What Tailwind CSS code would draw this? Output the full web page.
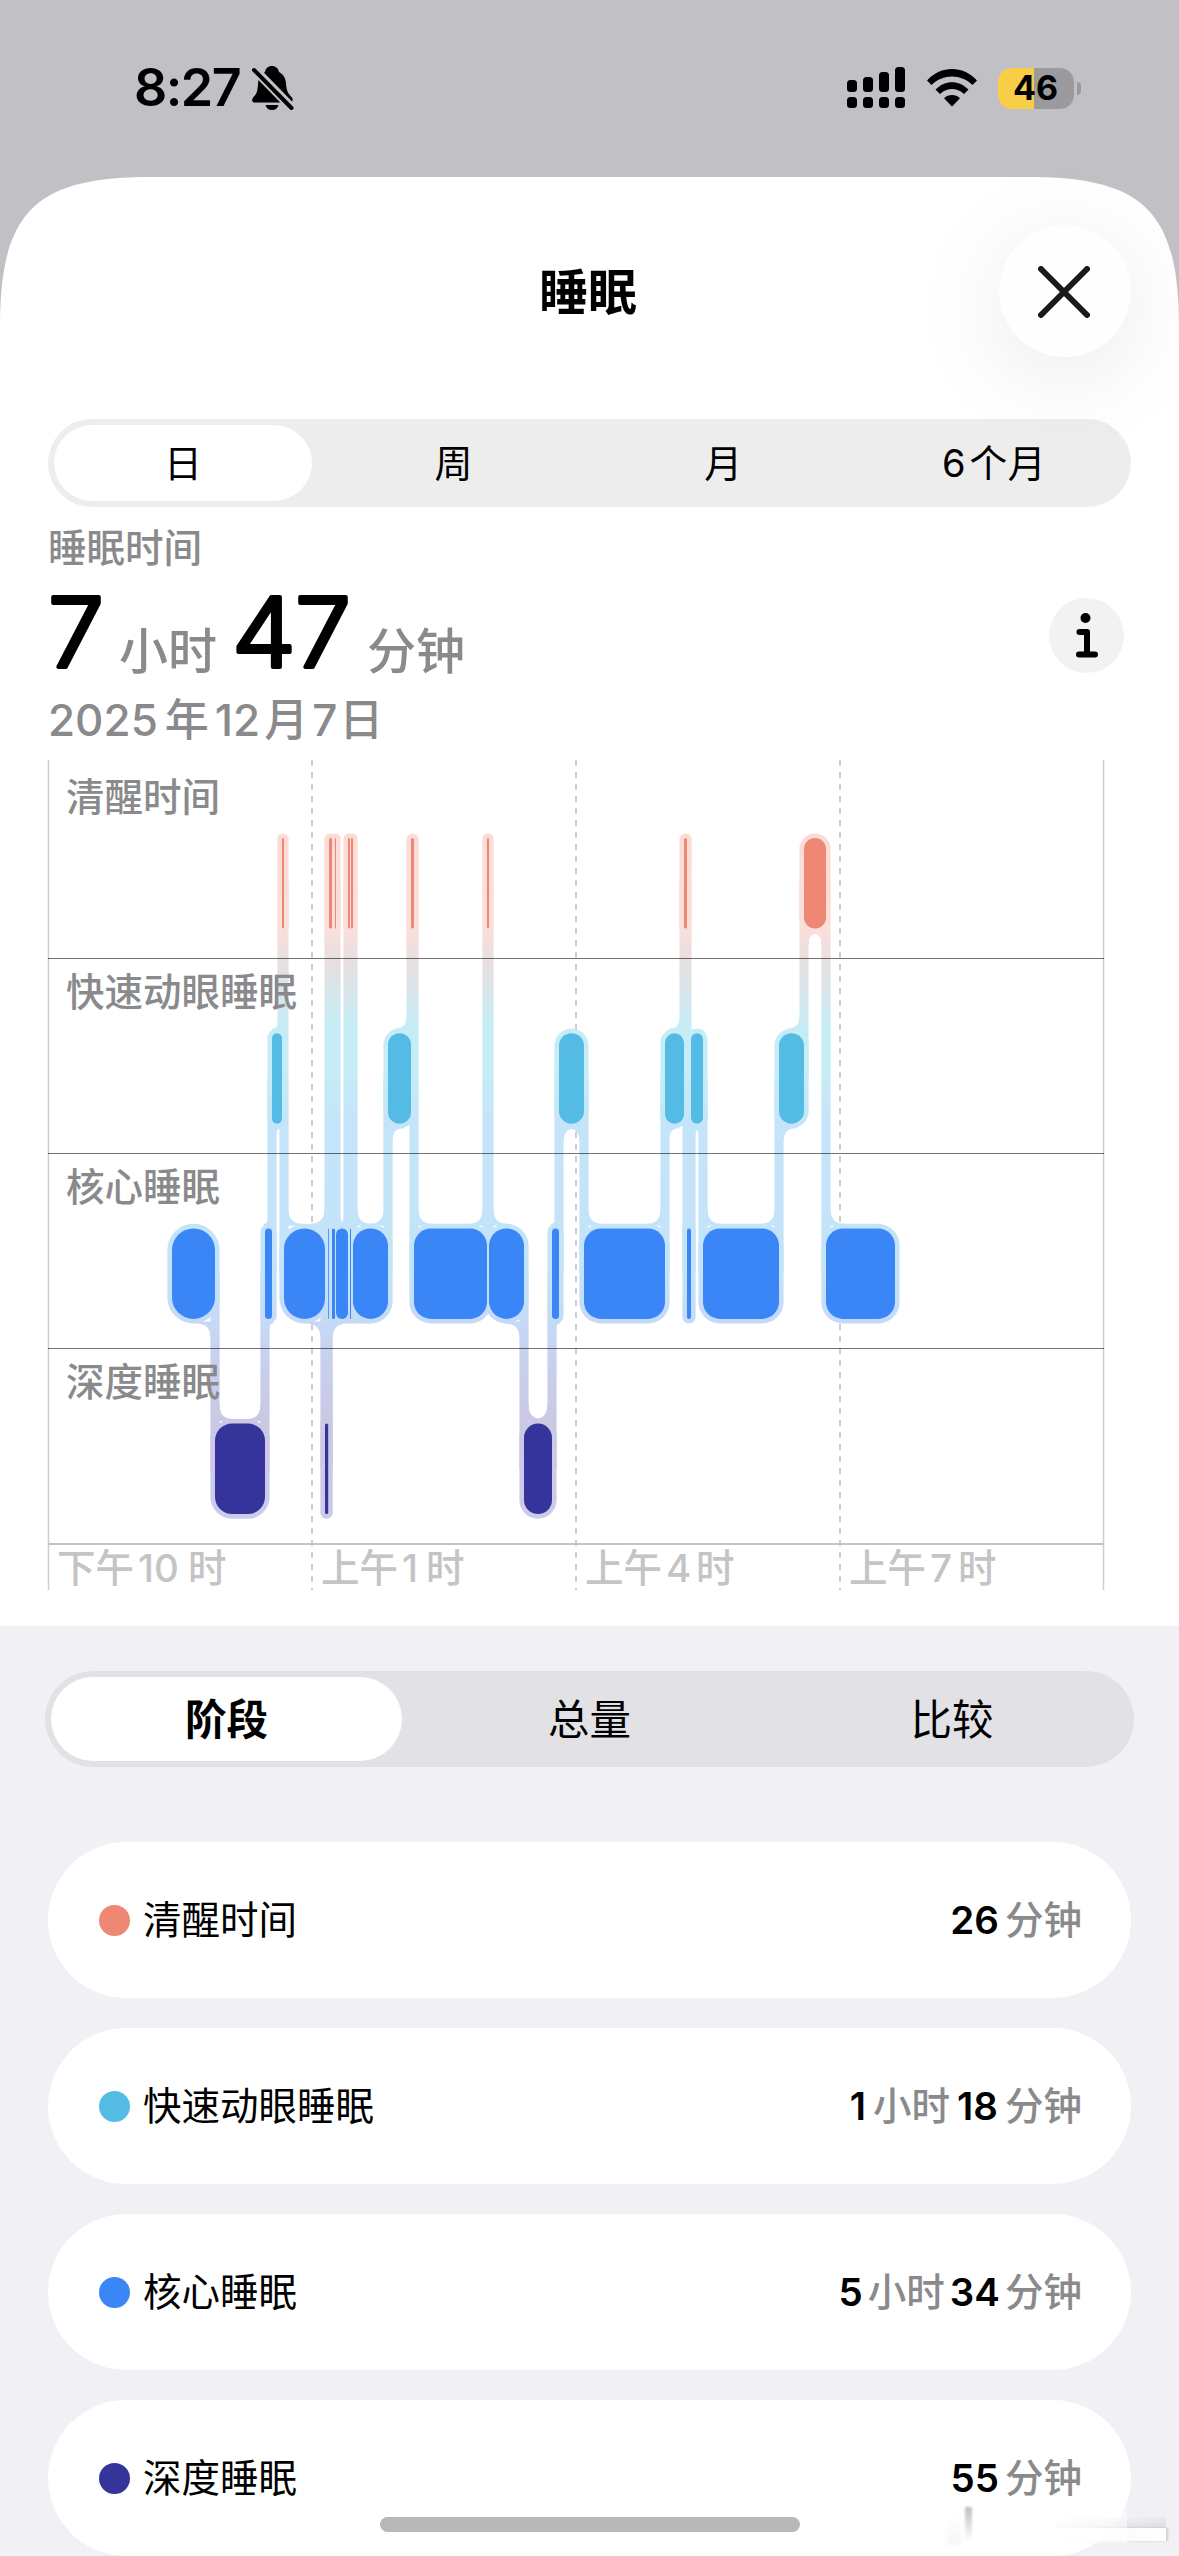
<!DOCTYPE html>
<html lang="zh-CN">
<head>
  <meta charset="UTF-8">
  <meta name="viewport" content="width=device-width, initial-scale=1.0">
  <title>睡眠</title>
  <script src="https://cdn.jsdelivr.net/npm/@tailwindcss/browser@4"></script>
</head>
<body class="w-[1179px] h-[2556px] overflow-hidden bg-[#c1c0c5] text-black font-['Inter','Noto_Sans_CJK_SC',sans-serif]">

  <!-- Status bar -->
  <header class="h-[177px] pt-[61px] pl-[134px] pr-[98px] flex items-start justify-between">
    <div class="flex items-center gap-[12px] h-[54px]">
      <span class="text-[52px] leading-[54px] font-semibold tracking-[-1.5px]">8:27</span>
      <svg class="w-[42px] h-[44px]" viewBox="0 0 42 44">
        <path d="M20 0C16 0 13.500 2.500 13 6C8.500 8.500 6.500 12 6 18C5.500 26 4.500 28 1.500 31C-1.500 35 1 36.500 3 36.500H38C41 36.500 41.500 33 39.500 31C35.500 27 34.500 24 34 17C33.500 11 30.500 8 27 6C26.500 2.500 23.500 0 20 0Z"/>
        <path d="M13.500 39H26.500C25.500 42.500 23.500 44 20 44C16.500 44 14.500 42.500 13.500 39Z"/>
        <path d="M4 5L40 42" class="stroke-[#c1c0c5]" stroke-width="9"/>
        <path d="M2 4L39.500 42" stroke="#000" stroke-width="4" stroke-linecap="round"/>
      </svg>
    </div>
    <div class="flex items-center h-[54px]">
      <svg class="w-[58px] h-[42px]" viewBox="0 0 58 42">
        <rect x="0" y="13" width="10" height="12" rx="3.500"/>
        <rect x="16" y="10" width="10" height="15" rx="3.500"/>
        <rect x="32" y="5" width="10" height="20" rx="3.500"/>
        <rect x="48" y="0" width="10" height="25" rx="3.500"/>
        <rect x="0" y="30" width="10" height="11" rx="3.500"/>
        <rect x="16" y="30" width="10" height="11" rx="3.500"/>
        <rect x="32" y="30" width="10" height="11" rx="3.500"/>
        <rect x="48" y="30" width="10" height="11" rx="3.500"/>
      </svg>
      <svg class="w-[50px] h-[38px] ml-[22px]" viewBox="0 0 50 38">
        <path d="M0 11.500C14 -3.800 36 -3.800 50 11.500L45.500 16C34 4.500 16 4.500 4.500 16Z"/>
        <path d="M8.500 20.500C18 10.700 32 10.700 41.500 20.500L37 25C30 18.300 20 18.300 13 25Z"/>
        <path d="M17 29.200C21.500 25 28.500 25 33 29.200L25 37.500Z"/>
      </svg>
      <div class="relative ml-[21px] w-[76px] h-[41px] pr-[1px] rounded-[14px] bg-linear-to-r from-[#f8ce46] from-47% to-[#9b9b9d] to-47% flex items-center justify-center">
        <span class="text-[34px] leading-none font-bold">46</span>
      </div>
      <div class="ml-[3px] w-[4px] h-[13px] rounded-r-full bg-[#9b9b9d]"></div>
    </div>
  </header>

  <main class="relative h-[2379px] bg-white">
    <!-- sheet corners -->
    <svg class="absolute left-0 top-0 w-[160px] h-[160px]" viewBox="0 0 160 160"><path class="fill-[#c1c0c5]" d="M0 0H150C35 0 0 35 0 150Z"/></svg>
    <svg class="absolute right-0 top-0 w-[160px] h-[160px]" viewBox="0 0 160 160"><path class="fill-[#c1c0c5]" d="M160 0H10C125 0 160 35 160 150Z"/></svg>

    <div class="h-[242px] px-[48px] pt-[48px] grid grid-cols-3">
      <h1 class="col-start-2 h-[132px] pr-[3px] pt-[2px] flex items-center justify-center text-[49px] font-bold leading-none">睡眠</h1>
      <button class="justify-self-end size-[132px] rounded-full bg-[#fefefe] shadow-[0_18px_100px_rgba(0,0,0,0.09)] flex items-center justify-center">
        <svg class="size-[52px] mr-[3px] mt-[2px]" viewBox="0 0 52 52"><path d="M3 3L49 49M49 3L3 49" fill="none" stroke="#1a1a1a" stroke-width="6" stroke-linecap="round"/></svg>
      </button>
    </div>

    <!-- Range switch -->
    <nav class="mx-[48px] h-[88px] p-[6px] rounded-full bg-black/7 grid grid-cols-4 text-[38px] leading-none">
      <div class="w-[258px] rounded-full bg-white flex items-center justify-center">日</div>
      <div class="flex items-center justify-center pr-[4px]">周</div>
      <div class="flex items-center justify-center">月</div>
      <div class="flex items-center justify-center pl-[6px] gap-[3px] tracking-[0.5px]"><span>6</span>个月</div>
    </nav>

    <!-- Summary -->
    <section class="px-[48px] h-[253px] pt-[18px] flex items-start justify-between text-[#8a8a8c]">
      <div>
        <p class="text-[38.5px] leading-[46px] font-medium">睡眠时间</p>
        <svg class="w-[430px] h-[104px] overflow-visible" viewBox="48 571 430 104">
          <g fill="#000" stroke="#000" stroke-width="4" stroke-linejoin="round" font-size="96" font-weight="300">
            <text x="48" y="667" textLength="56" lengthAdjust="spacingAndGlyphs">7</text>
            <text x="232" y="667" textLength="64" lengthAdjust="spacingAndGlyphs">4</text>
            <text x="295" y="667" textLength="56" lengthAdjust="spacingAndGlyphs">7</text>
          </g>
          <g fill="#8a8a8c" font-size="49" font-weight="500">
            <text x="119" y="669">小时</text>
            <text x="367" y="669">分钟</text>
          </g>
        </svg>
        <p class="mt-[17px] text-[44px] leading-[56px] font-medium flex whitespace-nowrap"><span>2025</span><span class="ml-[7px]">年</span><span class="ml-[6px]">12</span><span class="ml-[4px]">月</span><span class="ml-[4px]">7</span><span class="ml-[2px]">日</span></p>
      </div>
      <div class="mt-[73px] mr-[7px] size-[75px] rounded-full bg-[#f2f2f2] flex items-center justify-center">
        <svg class="w-[22px] h-[45px]" viewBox="0 0 22 45">
          <circle cx="9.500" cy="5" r="5"/>
          <path d="M3.500 19H11V41M3 41.500H19" fill="none" stroke="#000" stroke-width="6" stroke-linecap="round" stroke-linejoin="round"/>
        </svg>
      </div>
    </section>

    <!-- Sleep stage chart -->
    <svg id="chart" class="block ml-[46px] w-[1060px] h-[866px]" viewBox="46 760 1060 866">
      <defs>
        <linearGradient id="halo" gradientUnits="userSpaceOnUse" x1="0" y1="834" x2="0" y2="1519">
          <stop offset="0" stop-color="#fbdbd6"/>
          <stop offset="0.135" stop-color="#fbdfda"/>
          <stop offset="0.19" stop-color="#e6dfe1"/>
          <stop offset="0.28" stop-color="#c6edf6"/>
          <stop offset="0.34" stop-color="#c6edf6"/>
          <stop offset="0.43" stop-color="#c4e4f9"/>
          <stop offset="0.64" stop-color="#c3e3fa"/>
          <stop offset="0.71" stop-color="#c5daf7"/>
          <stop offset="0.77" stop-color="#c7d0ed"/>
          <stop offset="0.86" stop-color="#cbc8e5"/>
          <stop offset="1" stop-color="#cbcbea"/>
        </linearGradient>
      </defs>
      <g stroke="#cecece" stroke-width="2">
        <path d="M48.500 760V1590M1103.500 760V1590" stroke-width="1.500"/>
        <path d="M312 760V1590M576 760V1590M840 760V1590" stroke-dasharray="6 6"/>
      </g>
      <g id="links" fill="url(#halo)"></g>
      <g id="bars"></g>
      <path d="M48 958.500H1104M48 1153.500H1104M48 1348.500H1104" stroke="#000" stroke-opacity="0.55"/>
      <path d="M48 1544H1104" stroke="#c3c3c3" stroke-width="2"/>
      <g fill="#8a8a8c" font-size="38.500" font-weight="500">
        <text x="66" y="811">清醒时间</text>
        <text x="66" y="1006">快速动眼睡眠</text>
        <text x="66" y="1201">核心睡眠</text>
        <text x="66" y="1396">深度睡眠</text>
      </g>
      <g fill="#c4c4c6" font-size="38.500" font-weight="500">
        <text x="57" y="1582">下午</text><text x="138" y="1582">10</text><text x="188" y="1582">时</text>
        <text x="321" y="1582">上午</text><text x="402" y="1582">1</text><text x="426" y="1582">时</text>
        <text x="585" y="1582">上午</text><text x="666" y="1582">4</text><text x="696" y="1582">时</text>
        <text x="849" y="1582">上午</text><text x="930" y="1582">7</text><text x="958" y="1582">时</text>
      </g>
    </svg>

    <!-- Details -->
    <section class="relative h-[930px] bg-[#f0f0f5] pt-[45px]">
      <nav class="mx-[45px] h-[96px] p-[6px] rounded-full bg-[#e2e1e6] grid grid-cols-3 text-[41.500px] leading-none">
        <div class="w-[351px] rounded-full bg-white flex items-center justify-center pt-[4px] font-bold">阶段</div>
        <div class="flex items-center justify-center pt-[4px]">总量</div>
        <div class="flex items-center justify-center pl-[7px] pt-[4px]">比较</div>
      </nav>

      <ul class="mt-[75px] px-[48px] flex flex-col gap-[30px] text-[38.5px] leading-none">
        <li class="h-[156px] pl-[51px] pr-[49px] rounded-full bg-white flex items-center">
          <span class="size-[31px] rounded-full bg-[#ee8773]"></span>
          <span class="ml-[13px] mr-auto">清醒时间</span>
          <span class="flex items-center gap-[6px]"><b class="font-semibold">26</b><span class="font-medium text-[#8a8a8c]">分钟</span></span>
        </li>
        <li class="h-[156px] pl-[51px] pr-[49px] rounded-full bg-white flex items-center">
          <span class="size-[31px] rounded-full bg-[#54bce4]"></span>
          <span class="ml-[13px] mr-auto">快速动眼睡眠</span>
          <span class="flex items-center gap-[7px]"><b class="font-semibold">1</b><span class="font-medium text-[#8a8a8c]">小时</span><b class="font-semibold">18</b><span class="font-medium text-[#8a8a8c]">分钟</span></span>
        </li>
        <li class="h-[156px] pl-[51px] pr-[49px] rounded-full bg-white flex items-center">
          <span class="size-[31px] rounded-full bg-[#3a86f7]"></span>
          <span class="ml-[13px] mr-auto">核心睡眠</span>
          <span class="flex items-center gap-[5px]"><b class="font-semibold">5</b><span class="font-medium text-[#8a8a8c]">小时</span><b class="font-semibold">34</b><span class="font-medium text-[#8a8a8c]">分钟</span></span>
        </li>
        <li class="h-[156px] pl-[51px] pr-[49px] rounded-full bg-white flex items-center">
          <span class="size-[31px] rounded-full bg-[#35349b]"></span>
          <span class="ml-[13px] mr-auto">深度睡眠</span>
          <span class="flex items-center gap-[6px]"><b class="font-semibold">55</b><span class="font-medium text-[#8a8a8c]">分钟</span></span>
        </li>
      </ul>

      <!-- home indicator -->
      <div class="absolute left-[380px] bottom-[24px] w-[420px] h-[15px] rounded-full bg-[#b8b8b8]"></div>
      <!-- faded strip in the corner -->
      <div class="absolute left-[935px] bottom-[11px] w-[233px] h-[38px]">
        <div class="absolute left-[12px] top-[8px] w-[14px] h-[30px] bg-linear-to-b from-transparent to-black/4 blur-[2px]"></div>
        <div class="absolute left-[30px] top-0 w-[7px] h-[34px] bg-linear-to-b from-black/25 to-transparent blur-[1px]"></div>
        <div class="absolute left-[120px] top-[10px] w-[111px] h-[11px] bg-linear-to-br from-white/60 to-[#dedee2]"></div>
        <div class="absolute left-[120px] top-[21px] w-[111px] h-[13px] bg-linear-to-r from-white/40 to-white shadow-[2px_0_2px_rgba(0,0,0,0.15)]"></div>
        <div class="absolute left-[40px] top-[4px] w-[152px] h-[32px] bg-linear-to-r from-white/20 via-white/80 to-white/50"></div>
      </div>
    </section>
  </main>

  <script>
    // stages: 0 awake, 1 REM, 2 core, 3 deep
    const colors = ['#ee8773', '#54bce4', '#3a86f7', '#35349b'];
    const tops = [838, 1033.2, 1228.4, 1423.6];
    const barHeight = 90.5;
    const pad = 4.6;

    // [start x, stage]; each one lasts until the next starts
    const stages = [
      [172, 2], [215, 3], [265, 2], [272, 1], [282, 0], [284, 2], [325, 3], [328.2, 2],
      [329, 0], [332, 2], [335, 0], [336, 2], [348, 0], [350, 2], [351, 0], [353, 2],
      [388, 1], [411, 0], [414, 2], [487, 0], [489, 2], [524, 3], [552, 2], [559, 1],
      [584, 2], [665, 1], [684, 0], [687, 2], [691, 1], [703, 2], [779, 1], [804, 0], [826, 2],
    ];
    const end = 895;

    let links = '';
    let bars = '';
    const radius = (w) => (w < 48 ? w / 2 : 17);

    stages.forEach(([x, s], i) => {
      const next = stages[i + 1];
      const x2 = next ? next[0] : end;
      const w = x2 - x;
      const y = tops[s];
      const r = radius(w);
      bars += `<rect x="${x}" y="${y}" width="${w}" height="${barHeight}" rx="${r}" fill="${colors[s]}"/>`;
      links += `<rect x="${x - pad}" y="${y - pad}" width="${w + pad * 2}" height="${barHeight + pad * 2}" rx="${r + pad}"/>`;
      if (!next) return;

      // connector to the next stage
      const ns = next[1];
      const y1 = y + barHeight / 2;
      const y2 = tops[ns] + barHeight / 2;
      links += `<rect x="${x2 - pad}" y="${Math.min(y1, y2)}" width="${pad * 2}" height="${Math.abs(y2 - y1)}"/>`;

      // fillets where the connector leaves one bar and meets the other
      const down = ns > s ? 1 : -1;
      const nextEnd = stages[i + 2] ? stages[i + 2][0] : end;
      const ra = Math.min(14, w / 2);
      const rb = Math.min(14, (nextEnd - x2) / 2);
      const ya = down > 0 ? y + barHeight + pad : y - pad;
      const yb = down > 0 ? tops[ns] - pad : tops[ns] + barHeight + pad;
      const xa = x2 - pad;
      const xb = x2 + pad;
      links += `<path d="M${xa + 1} ${ya + ra * down}H${xa}Q${xa} ${ya} ${xa - ra} ${ya}V${ya - 2 * down}H${xa + 1}Z"/>`;
      links += `<path d="M${xb - 1} ${yb - rb * down}H${xb}Q${xb} ${yb} ${xb + rb} ${yb}V${yb + 2 * down}H${xb - 1}Z"/>`;
    });

    // the short stages around 1 o'clock share one outline
    links += '<path d="M325 1210H324.400Q324.400 1223.800 310 1223.800V1232H325Z"/>';
    links += '<path d="M332 1338H332.800Q332.800 1323.500 347 1323.500H372V1312H325Z"/>';

    document.getElementById('links').innerHTML = links;
    document.getElementById('bars').innerHTML = bars;
  </script>
</body>
</html>
